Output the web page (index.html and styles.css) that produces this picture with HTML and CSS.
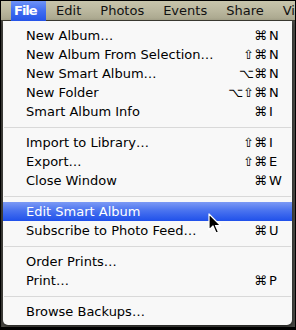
FILE: index.html
```html
<!DOCTYPE html>
<html lang="en">
<head>
  <meta charset="UTF-8" />
  <title>File menu</title>
  <link rel="stylesheet" href="styles.css">
</head>
<body>
  <div class="screen">
    <div class="menubar">
      <span class="bar-item active">File</span>
      <span class="bar-item">Edit</span>
      <span class="bar-item">Photos</span>
      <span class="bar-item">Events</span>
      <span class="bar-item">Share</span>
      <span class="bar-item">Vi</span>
    </div>

    <div class="menu">
      <div class="item"><span>New Album…</span><span class="keys">⌘<b>N</b></span></div>
      <div class="item"><span>New Album From Selection…</span><span class="keys">⇧⌘<b>N</b></span></div>
      <div class="item"><span>New Smart Album…</span><span class="keys">⌥⌘<b>N</b></span></div>
      <div class="item"><span>New Folder</span><span class="keys">⌥⇧⌘<b>N</b></span></div>
      <div class="item"><span>Smart Album Info</span><span class="keys">⌘<b>I</b></span></div>
      <div class="sep"></div>
      <div class="item"><span>Import to Library…</span><span class="keys">⇧⌘<b>I</b></span></div>
      <div class="item"><span>Export…</span><span class="keys">⇧⌘<b>E</b></span></div>
      <div class="item"><span>Close Window</span><span class="keys">⌘<b>W</b></span></div>
      <div class="sep"></div>
      <div class="item selected"><span>Edit Smart Album</span></div>
      <div class="item"><span>Subscribe to Photo Feed…</span><span class="keys">⌘<b>U</b></span></div>
      <div class="sep"></div>
      <div class="item"><span>Order Prints…</span></div>
      <div class="item"><span>Print…</span><span class="keys">⌘<b>P</b></span></div>
      <div class="sep"></div>
      <div class="item"><span>Browse Backups…</span></div>
    </div>

    <!-- mouse pointer over the menu -->
    <svg class="cursor" width="14" height="22" viewBox="0 0 14 22">
      <path d="M1 1 L1 17 L5 13 L8 20 L10.5 19 L7.5 12.5 L12.5 12.5 Z" fill="#000" stroke="#fff" stroke-width="1.2" stroke-linejoin="round"/>
    </svg>
  </div>
</body>
</html>
```

FILE: styles.css
```css
* {
  box-sizing: border-box;
}

html, body {
  margin: 0;
  padding: 0;
  background: #000;
}

.screen {
  position: relative;
  width: 296px;
  height: 330px;
  overflow: hidden;
  border: 1px solid #000;
  border-width: 1px 1px 3px 1px;
  background: linear-gradient(to right, #3c3b36 0, #55544e 2px, #4a4a46 100%);
  font-family: 'DejaVu Sans', 'Verdana', sans-serif;
  font-size: 13px;
}

.menubar {
  display: flex;
  align-items: center;
  height: 20px;
  padding-left: 10px;
  background: linear-gradient(to bottom, #c8c5ac 0%, #b9b69d 55%, #a9a68d 100%);
  color: #111;
  border-bottom: 1px solid #3e3d35;
}

.bar-item {
  padding: 0 9.5px;
  line-height: 20px;
}

.bar-item.active {
  padding: 0 9px 0 3px;
  margin-right: 1px;
  font-weight: bold;
  letter-spacing: -1px;
  color: #fff;
  background: linear-gradient(to bottom, #6f93f6 0%, #3f6cf0 50%, #2553e8 100%);
}

.menu {
  width: 289px;
  margin-left: 2px;
  padding: 5px 0 4px;
  background: #f8f8f8;
  border-radius: 0 0 5px 5px;
  box-shadow: 0 2px 4px rgba(0, 0, 0, 0.6);
  color: #000;
}

.item {
  display: flex;
  justify-content: space-between;
  align-items: center;
  height: 19px;
  padding: 0 12px 0 23px;
  white-space: nowrap;
}

.keys b {
  display: inline-block;
  width: 13px;
  padding-left: 2px;
  font-weight: normal;
}

.item.selected {
  color: #fff;
  background: linear-gradient(to bottom, #7c9af5 0%, #4a73ef 45%, #1f50ea 100%);
}

.sep {
  height: 12px;
  display: flex;
  align-items: center;
  padding: 0 1px;
}

.sep::before {
  content: '';
  flex: 1;
  height: 1px;
  background: #d9d9d9;
}

.cursor {
  position: absolute;
  left: 207px;
  top: 212px;
}
```
